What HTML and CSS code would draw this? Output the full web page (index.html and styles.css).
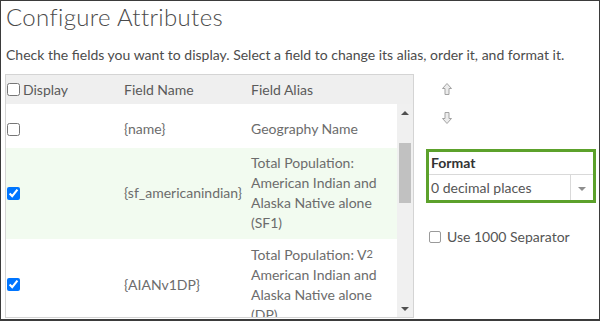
FILE: index.html
```html
<!DOCTYPE html>
<html>
<head>
    <title>Configure Attributes</title>
    <link rel="stylesheet" href="styles.css">
</head>
<body>
    <div class="frame">
        <h1>Configure Attributes</h1>
        <p class="hint">Check the fields you want to display. Select a field to change its alias, order it, and format it.</p>

        <div class="main">
            <div class="fields">
                <div class="row head">
                    <label class="cell display"><input type="checkbox">Display</label>
                    <div class="cell">Field Name</div>
                    <div class="cell">Field Alias</div>
                </div>
                <div class="body">
                    <div class="rows">
                        <div class="row short">
                            <div class="cell display"><input type="checkbox"></div>
                            <div class="cell">{name}</div>
                            <div class="cell alias">Geography Name</div>
                        </div>
                        <div class="row selected">
                            <div class="cell display"><input type="checkbox" checked></div>
                            <div class="cell">{sf_americanindian}</div>
                            <div class="cell alias">Total Population: American Indian and Alaska Native alone (SF1)</div>
                        </div>
                        <div class="row">
                            <div class="cell display"><input type="checkbox" checked></div>
                            <div class="cell">{AIANv1DP}</div>
                            <div class="cell alias">Total Population: V<span class="sup">2</span> American Indian and Alaska Native alone (DP)</div>
                        </div>
                    </div>
                    <div class="scrollbar">
                        <div class="scroll-btn"><span class="tri up"></span></div>
                        <div class="track"><div class="thumb"></div></div>
                        <div class="scroll-btn"><span class="tri down"></span></div>
                    </div>
                </div>
            </div>

            <div class="side">
                <svg class="move" width="10" height="12" viewBox="0 0 10 12">
                    <path d="M5 0.5 L9.5 5.5 L7 5.5 L7 11.5 L3 11.5 L3 5.5 L0.5 5.5 Z" fill="#ececec" stroke="#a3a3a3" stroke-width="1"/>
                </svg>
                <svg class="move down" width="10" height="12" viewBox="0 0 10 12">
                    <path d="M5 11.5 L9.5 6.5 L7 6.5 L7 0.5 L3 0.5 L3 6.5 L0.5 6.5 Z" fill="#ececec" stroke="#a3a3a3" stroke-width="1"/>
                </svg>

                <div class="format">
                    <div class="format-label">Format</div>
                    <div class="select">
                        <span class="select-text">0 decimal places</span>
                        <span class="select-btn"><span class="caret"></span></span>
                    </div>
                </div>

                <label class="separator"><input type="checkbox">Use 1000 Separator</label>
            </div>
        </div>
    </div>
</body>
</html>
```

FILE: styles.css
```css
body {
    margin: 0;
    font-family: Lato, "Open Sans", sans-serif;
    background-color: #fff;
}

.frame {
    width: 600px;
    height: 321px;
    box-sizing: border-box;
    border: 1px solid #3b3b3b;
    border-bottom-width: 2px;
    padding-left: 4px;
    overflow: hidden;
}

h1 {
    margin: 2px 0 0 1px;
    font-size: 24px;
    font-weight: 300;
    letter-spacing: 0.35px;
    line-height: 28px;
    color: #4a4a4a;
}

.hint {
    margin: 14px 0 0 1px;
    font-size: 14px;
    line-height: 20px;
    color: #4c4c4c;
}

.main {
    display: flex;
    margin-top: 9px;
}

/* field list */
.fields {
    width: 409px;
    box-sizing: border-box;
    border: 1px solid #d4d4d4;
    background-color: #efefef;
    font-size: 14px;
    line-height: 20px;
    color: #6c6c6c;
}

.row {
    display: grid;
    grid-template-columns: 118px 127px 1fr;
    align-items: center;
    padding: 5px 0 6px;
}

.row.head {
    height: 29px;
    box-sizing: border-box;
    padding: 0;
    color: #5a5a5a;
}

.row.short {
    padding: 15px 0 9px;
}

.row.selected {
    background-color: #f2fbf0;
}

.cell {
    display: flex;
    align-items: center;
}

.cell.display {
    padding-left: 1px;
}

.cell.alias {
    display: block;
    padding-right: 6px;
}

.sup {
    font-size: 11px;
    vertical-align: 2px;
}

input[type="checkbox"] {
    width: 13px;
    height: 13px;
    margin: 0 3px 0 0;
}

.body {
    display: flex;
    height: 213px;
    overflow: hidden;
}

.rows {
    flex: 1;
    background-color: #fff;
}

.scrollbar {
    width: 16px;
    display: flex;
    flex-direction: column;
    background-color: #f0f0f0;
}

.scroll-btn {
    height: 17px;
    display: flex;
    align-items: center;
    justify-content: center;
}

.track {
    flex: 1;
}

.thumb {
    margin: 22px 2px 0;
    height: 60px;
    background-color: #c1c1c1;
}

.tri {
    width: 0;
    height: 0;
    border-left: 4px solid transparent;
    border-right: 4px solid transparent;
}

.tri.up {
    border-bottom: 4px solid #505050;
}

.tri.down {
    border-top: 4px solid #505050;
}

/* right side */
.side {
    margin-left: 12px;
    width: 170px;
    display: flex;
    flex-direction: column;
}

.move {
    display: block;
    margin: 9px 0 0 16px;
}

.move.down {
    margin-top: 17px;
}

.format {
    margin-top: 25px;
    border: 3px solid #5ca12b;
    font-size: 14px;
}

.format-label {
    height: 22px;
    line-height: 22px;
    padding-left: 2px;
    font-weight: 700;
    color: #333;
    border-bottom: 1px solid #d9d9d9;
}

.select {
    display: flex;
    height: 25px;
    align-items: center;
    color: #555;
}

.select-text {
    flex: 1;
    padding-left: 2px;
}

.select-btn {
    width: 22px;
    height: 25px;
    border-left: 1px solid #d9d9d9;
    display: flex;
    align-items: center;
    justify-content: center;
}

.caret {
    border-left: 4px solid transparent;
    border-right: 4px solid transparent;
    border-top: 4px solid #8e8e8e;
    margin-top: 2px;
}

.separator {
    display: flex;
    align-items: center;
    margin-top: 24px;
    padding-left: 3px;
    font-size: 14px;
    line-height: 20px;
    color: #555;
}

.separator input {
    appearance: none;
    width: 12px;
    height: 12px;
    border: 1px solid #9a9a9a;
    border-radius: 2px;
    margin-right: 6px;
}
```
